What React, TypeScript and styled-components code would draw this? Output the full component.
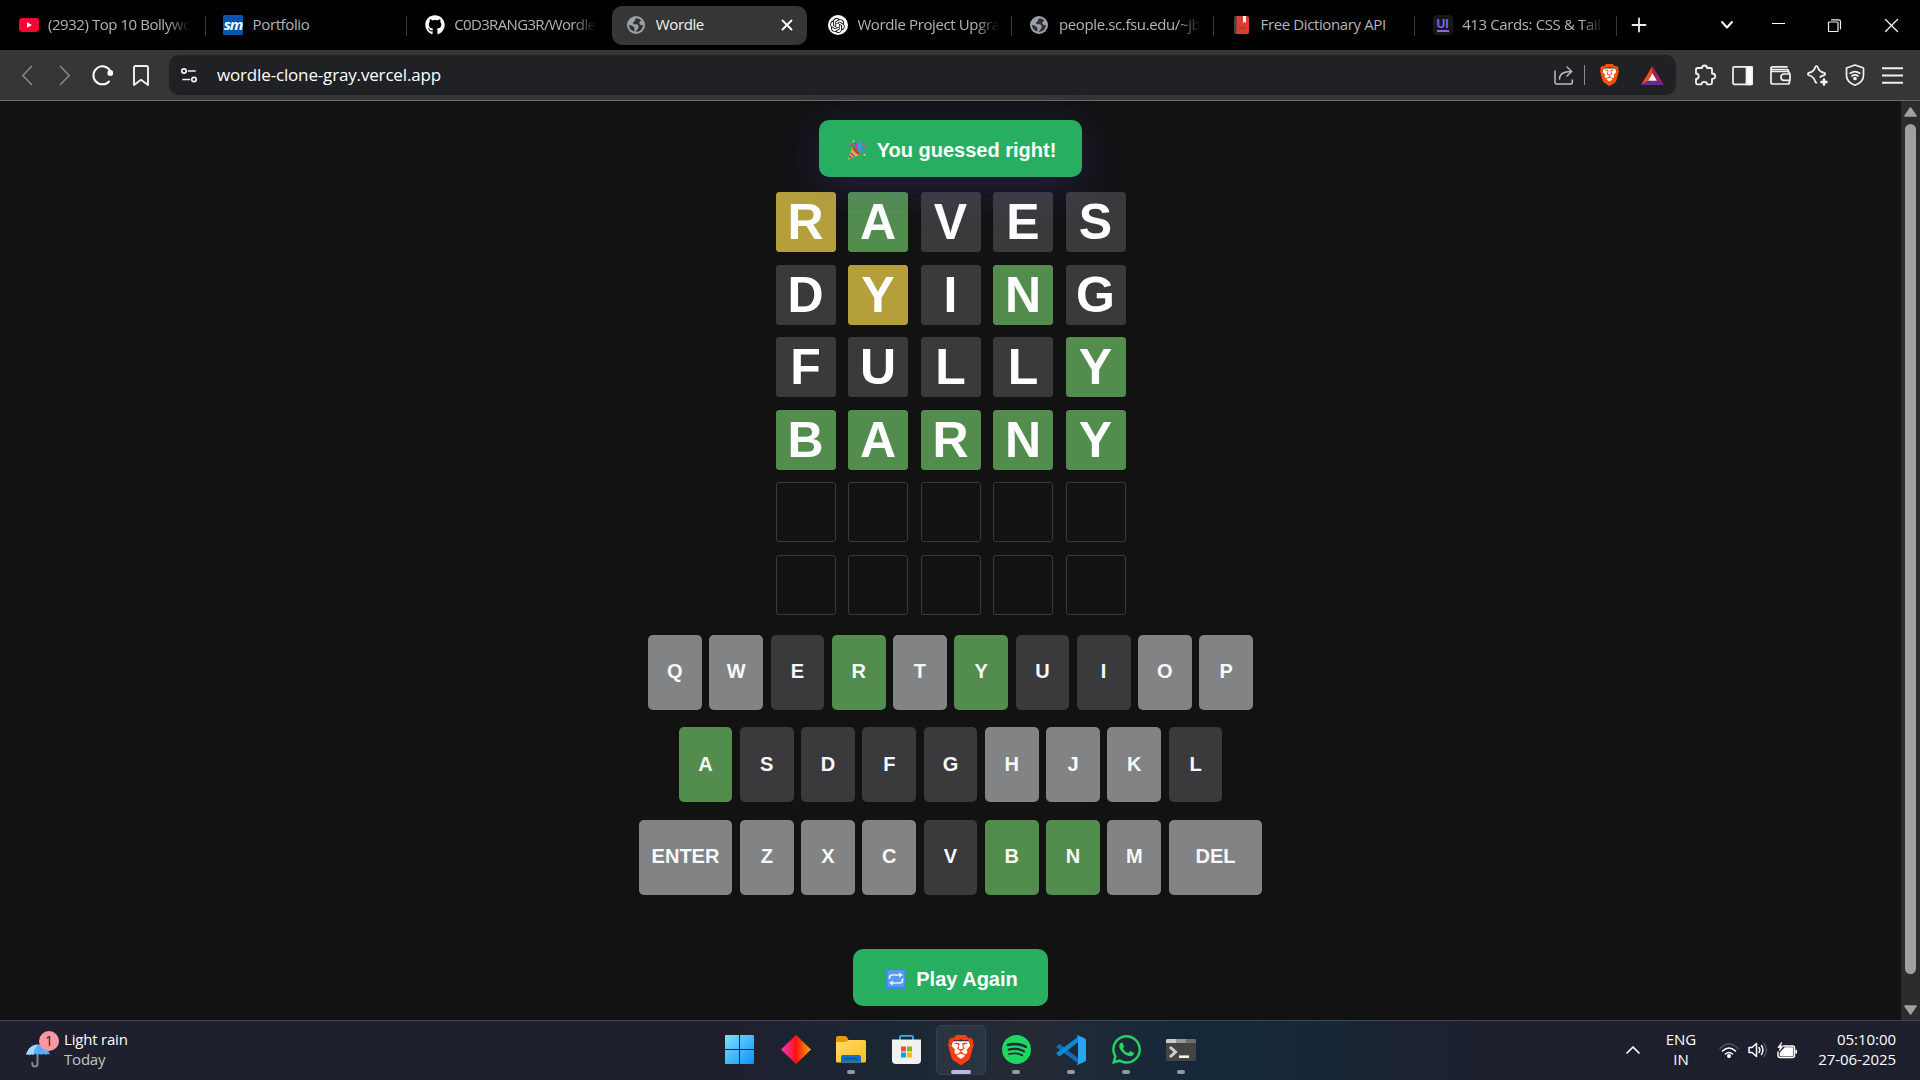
import React from "react";
import styled, { createGlobalStyle } from "styled-components";
import { SiBrave, SiOpenai, SiSpotify } from "react-icons/si";
import { FaGithub, FaWhatsapp } from "react-icons/fa";

const Global = createGlobalStyle`
  * { box-sizing: border-box; }
  body { margin: 0; background: #121213; overflow: hidden; }
  svg { display: block; flex: none; overflow: visible; }
`;

const ui = `"Open Sans", "Noto Sans", sans-serif`;

const Screen = styled.div`
  width: 1920px;
  height: 1080px;
  display: flex;
  flex-direction: column;
  background: #121213;
  font-family: ${ui};
`;

/* ---------- tab strip ---------- */
const TabStrip = styled.div`
  height: 50px;
  display: flex;
  align-items: center;
  background: #000;
  padding-left: 4px;
`;
const TabCell = styled.div<{ $divider?: boolean }>`
  position: relative;
  width: 201.6px;
  height: 39px;
  display: flex;
  align-items: center;
  padding-left: 3.500px;
  &:first-child { padding-left: 0.500px; }
  &::after {
    content: "";
    position: absolute;
    right: 0;
    top: 10px;
    width: 1px;
    height: 20px;
    background: ${(p) => (p.$divider ? "#3a3a3a" : "transparent")};
  }
`;
const TabFace = styled.div<{ $active?: boolean }>`
  width: 195px;
  height: 39px;
  border-radius: 10px;
  background: ${(p) => (p.$active ? "#363636" : "transparent")};
  display: flex;
  align-items: center;
  padding: 0 14px 0 13.500px;
  gap: 9px;
`;
const Favicon = styled.span`
  width: 21px;
  display: flex;
  justify-content: center;
  flex: none;
`;
const TabTitle = styled.span<{ $active?: boolean; $fade?: boolean; $track?: number }>`
  flex: 1;
  min-width: 0;
  max-width: 145px;
  margin-right: -8px;
  padding-bottom: 2px;
  overflow: hidden;
  white-space: nowrap;
  font-size: 15px;
  line-height: 22px;
  letter-spacing: ${(p) => p.$track ?? -0.38}px;
  color: ${(p) => (p.$active ? "#f1f1f1" : "#b4b4b4")};
  mask-image: ${(p) => (p.$fade ? "linear-gradient(90deg, #000 82%, transparent 98%)" : "none")};
`;
const CloseTab = styled.span`
  display: flex;
  margin-right: 1px;
`;
const NewTab = styled.div`
  width: 44px;
  display: flex;
  justify-content: center;
`;
const WindowControls = styled.div`
  margin-left: auto;
  display: flex;
  align-items: center;
`;
const Control = styled.div<{ $w: number }>`
  width: ${(p) => p.$w}px;
  display: flex;
  justify-content: center;
`;

/* ---------- toolbar ---------- */
const Toolbar = styled.div`
  height: 51px;
  display: flex;
  align-items: center;
  background: #363636;
  border-bottom: 1px solid #6a6a6a;
  padding: 0 8.5px 0 8px;
`;
const ToolSlot = styled.div<{ $w?: number }>`
  width: ${(p) => p.$w ?? 37.5}px;
  height: 40px;
  display: flex;
  align-items: center;
  justify-content: center;
`;
const AddressBar = styled.div`
  flex: 1;
  height: 40px;
  margin: 0 10.5px 0 9px;
  border-radius: 10px;
  background: #202124;
  display: flex;
  align-items: center;
  padding-left: 12px;
  padding-right: 12px;
`;
const Url = styled.span`
  margin-left: 20px;
  font-size: 17px;
  line-height: 24px;
  letter-spacing: -0.16px;
  color: #fff;
  flex: 1;
`;
const BarDivider = styled.span`
  width: 1px;
  height: 20px;
  margin: 0 15px 0 10px;
  background: #8b8c8e;
`;
const BarIcon = styled.span<{ $gap?: number }>`
  display: flex;
  margin-left: ${(p) => p.$gap ?? 0}px;
`;

/* ---------- page ---------- */
const Viewport = styled.div`
  height: 919px;
  display: flex;
`;
const Page = styled.main`
  width: 1901px;
  display: flex;
  flex-direction: column;
  align-items: center;
  padding-top: 19px;
  font-family: "Liberation Sans", Arial, sans-serif;
`;
const Pill = styled.div<{ $w: number; $glow?: boolean }>`
  position: relative;
  z-index: 1;
  width: ${(p) => p.$w}px;
  height: 57px;
  flex: none;
  border-radius: 10px;
  background: #27ae60;
  color: #fff;
  font-size: 20px;
  font-weight: 700;
  display: flex;
  align-items: center;
  justify-content: center;
  gap: 10px;
  padding: ${(p) => (p.$glow ? 3 : 4)}px 0 0 3px;
  white-space: nowrap;
  box-shadow: ${(p) => (p.$glow ? "0 10px 44px rgba(92, 96, 255, 0.2)" : "none")};
`;
const Board = styled.div`
  margin-top: 15px;
  display: grid;
  grid-template-columns: repeat(5, 60px);
  grid-auto-rows: 60px;
  gap: 12.5px;
`;
type State = "hit" | "near" | "miss" | "idle";
const fill: Record<State, string> = {
  hit: "#538d4e",
  near: "#b59f3b",
  miss: "#3a3a3c",
  idle: "#818384",
};
const Tile = styled.div<{ $state?: State }>`
  border-radius: 3px;
  border: 1px solid ${(p) => (p.$state ? fill[p.$state] : "#3a3a3c")};
  background: ${(p) => (p.$state ? fill[p.$state] : "transparent")};
  color: #fff;
  font-size: 50px;
  font-weight: 700;
  line-height: 58px;
  text-align: center;
`;
const Keyboard = styled.div`
  margin-top: 20px;
  display: flex;
  flex-direction: column;
  align-items: center;
  gap: 17.5px;
`;
const KeyRow = styled.div`
  display: flex;
  gap: 7.5px;
`;
const Key = styled.div<{ $state: State; $wide?: boolean }>`
  width: ${(p) => (p.$wide ? 93.75 : 53.75)}px;
  height: 75px;
  border-radius: 5px;
  background: ${(p) => fill[p.$state]};
  color: #f8f8f8;
  font-size: 20px;
  font-weight: 700;
  display: flex;
  align-items: center;
  justify-content: center;
  padding-bottom: 1px;
`;
const Again = styled.div`
  margin-top: 54px;
`;
const ScrollTrack = styled.div`
  width: 19px;
  background: #2c2c2c;
  display: flex;
  flex-direction: column;
  align-items: center;
  padding: 6px 0 5px;
`;
const ScrollThumb = styled.div`
  width: 11px;
  height: 850px;
  margin: 7px 0 auto;
  border-radius: 6px;
  background: #9f9f9f;
`;

/* ---------- taskbar ---------- */
const Taskbar = styled.footer`
  height: 60px;
  border-top: 1px solid #45474d;
  background: linear-gradient(90deg, #1e202e 0, #1e202e 740px, #1b2734 900px, #242a34 1030px, #14283a 1190px, #14283a 1250px, #1d202d 1480px, #1d1f2c 100%);
  display: flex;
  color: #fff;
  font-size: 15px;
  line-height: 20px;
`;
const Weather = styled.div`
  width: 716px;
  padding-left: 25px;
  padding-bottom: 2px;
  display: flex;
  align-items: center;
`;
const WeatherText = styled.div`
  margin-left: 5px;
  display: flex;
  flex-direction: column;
  padding-bottom: 2px;
`;
const Line = styled.span<{ $dim?: boolean; $track?: number }>`
  color: ${(p) => (p.$dim ? "#c2c3c8" : "#fff")};
  letter-spacing: ${(p) => p.$track ?? -0.2}px;
`;
const Apps = styled.div`
  display: flex;
  gap: 5px;
  padding-top: 4px;
`;
const AppSlot = styled.div<{ $active?: boolean }>`
  width: 50px;
  height: 50px;
  border-radius: 5px;
  border: 1px solid ${(p) => (p.$active ? "#35424f" : "transparent")};
  background: ${(p) => (p.$active ? "#2a3541" : "transparent")};
  display: flex;
  flex-direction: column;
  align-items: center;
  justify-content: space-between;
  padding-top: 8px;
  &:first-child { padding-right: 3px; }
`;
const Running = styled.span<{ $active?: boolean; $on?: boolean }>`
  width: ${(p) => (p.$active ? 20 : 8)}px;
  height: 4px;
  border-radius: 2px;
  background: ${(p) => (p.$active ? "#beb8e6" : p.$on ? "#9698a0" : "transparent")};
`;
const Tray = styled.div`
  flex: 1;
  display: flex;
  align-items: center;
  justify-content: flex-end;
  padding: 0 24px 1px 0;
`;
const TwoLine = styled.div<{ $w: number; $align: string }>`
  width: ${(p) => p.$w}px;
  display: flex;
  flex-direction: column;
  align-items: ${(p) => p.$align};
  white-space: nowrap;
  padding-bottom: 2px;
`;
const TrayIcons = styled.div`
  display: flex;
  align-items: center;
  gap: 9px;
  margin: 0 20px 0 7px;
`;

/* ---------- icons ---------- */
const Stroke = ({ w, h, d, c = "#f2f2f2", s = 1.6, children }: { w: number; h: number; d?: string; c?: string; s?: number; children?: React.ReactNode }) => (
  <svg width={w} height={h} viewBox={`0 0 ${w} ${h}`} fill="none" stroke={c} strokeWidth={s} strokeLinecap="round" strokeLinejoin="round">
    {d && <path d={d} />}
    {children}
  </svg>
);

const Globe = () => (
  <svg width="18" height="18" viewBox="0 0 18 18">
    <circle cx="9" cy="9" r="9" fill="#9aa0a6" />
    <path d="M9.8 2.2 8 3.3v1.8L5.8 6.6 6.7 8.3h3.5l1.6 1.9-.7 2.2-2.6 3.4A7 7 0 0 0 15.6 11l.3-2.2-2 .4-1.6-1.5.4-2 1.6-1.1A7 7 0 0 0 9.8 2.2ZM2 8.8 5.5 10l1.9 1.8v3.7A7 7 0 0 1 2 8.8Z" fill="#2f3133" />
  </svg>
);
const Youtube = () => (
  <svg width="20" height="14" viewBox="0 0 20 14">
    <rect width="20" height="14" rx="3.4" fill="#ff0033" />
    <path d="m8 4.2 5 2.8-5 2.8Z" fill="#fff" />
  </svg>
);
const SmBadge = styled.span`
  width: 20px;
  height: 20px;
  border-radius: 1.5px;
  background: #0254ac;
  color: #fff;
  font: italic 700 15px/18px "Open Sans", sans-serif;
  letter-spacing: -1.1px;
  text-align: center;
`;
const ChatBadge = styled.span`
  width: 20px;
  height: 20px;
  border-radius: 50%;
  background: #fff;
  color: #111;
  display: flex;
  align-items: center;
  justify-content: center;
`;
const Book = () => (
  <svg width="15" height="18" viewBox="0 0 15 18">
    <path d="M0 1.5Q0 0 1.5 0H3v18H1.5Q0 18 0 16.5Z" fill="#444" />
    <path d="M2.5 0H13q2 0 2 2v14q0 2-2 2H2.5Z" fill="#dc3c34" />
    <path d="M9 0h3v7l-1.5-1.2L9 7Z" fill="#fff" />
    <path d="M5 12h7" stroke="#a92a26" strokeWidth="1" />
  </svg>
);
const UiBadge = styled.span`
  width: 20px;
  height: 20px;
  border-radius: 4px;
  background: #171719;
  display: flex;
  flex-direction: column;
  align-items: center;
  padding-top: 3px;
  color: #7a63f0;
  font: 700 12px/11px "Inter", sans-serif;
  &::after {
    content: "";
    width: 12px;
    height: 2px;
    margin-top: 1px;
    background: #9161e8;
  }
`;

const BraveLion = ({ size, color }: { size: number; color: string }) => (
  <svg width={size * 0.86} height={size} viewBox="0 0 20.6 24">
    <path d="M4 5h12.6l1.6 4-3.4 9-4.5 3.3L5.800 18 2.400 9Z" fill="#fff" />
    <g transform="translate(-1.700 0)" color={color}>
      <SiBrave size={24} />
    </g>
  </svg>
);
const Bat = () => (
  <svg width="23" height="19" viewBox="0 0 23 19">
    <path d="M11.500 0 0 19l7.500-4.300 4-7.200Z" fill="#ff4724" />
    <path d="M11.500 0 23 19l-7.500-4.300-4-7.200Z" fill="#9e1f63" />
    <path d="M0 19h23l-7.500-4.300h-8Z" fill="#662d91" />
    <path d="m11.500 7.300 4.300 7.500H7.200Z" fill="#fff" />
  </svg>
);
const Popper = () => (
  <svg width="19" height="20" viewBox="0 0 19 20">
    <path d="M4.500 7 12 15 .8 19.600q-.8.200-.6-.6Z" fill="#f5a33a" />
    <path d="m2.800 13 4 4M1.400 16l2.400 2.400" stroke="#4a5ae0" strokeWidth="1.400" />
    <ellipse cx="8.300" cy="11" rx="1.700" ry="4.800" transform="rotate(-43 8.300 11)" fill="#a8502c" />
    <path d="M7.500 9C9.500 7 9 4.500 6.500 3M3 5.500q2-1 3.300.8" stroke="#e32a86" strokeWidth="1.700" fill="none" />
    <path d="M9.500 10.500c3.500-.5 1.500-4.500 4.500-6M9 8q3-2.500 2-7.500" stroke="#2f9df0" strokeWidth="2" fill="none" />
    <path d="M11 12.500c2-2.500 5-2 7-.2" stroke="#3894ee" strokeWidth="1.800" fill="none" />
    <path d="m13.500 8 5-1.800M14.500 4.200l2-1.400" stroke="#e83d99" strokeWidth="1.700" />
    <circle cx="5.500" cy="1.200" r="1" fill="#f2cb44" />
    <circle cx="16.500" cy="14.800" r="1.100" fill="#f2cb44" />
    <circle cx="1.800" cy="4.500" r="1" fill="#e4428d" />
  </svg>
);
const Repeat = () => (
  <svg width="20" height="20" viewBox="0 0 20 20">
    <rect width="20" height="20" rx="2" fill="#3f86e8" />
    <rect x="1.500" y="1.200" width="17" height="16.800" rx="1.500" fill="#579cf4" />
    <path d="M3.500 10V8.700Q3.500 6 6.200 6H14M16.500 9.500v1.800q0 2.700-2.700 2.700H6" stroke="#e9effe" strokeWidth="1.700" fill="none" />
    <path d="m13 3.500 4 2.500-4 2.500ZM7 11.500 3 14l4 2.500Z" fill="#e9effe" />
  </svg>
);
const Umbrella = () => (
  <svg width="34" height="37" viewBox="0 0 34 37">
    <path d="M12.500 22v10.500q0 3-2.600 3t-2.600-3V31" stroke="#85878c" strokeWidth="2" fill="none" />
    <path d="M1 24C3 17 7.500 13.500 13 13.500S23 17 25 24q-2-2-4 0-2.200-2-4.300 0-2.200-2-4.300 0-2.200-2-4.200 0-1.800-1.500-3.500 0-1.700-1.500-3.700 0Z" fill="#58aef5" />
    <path d="M1 24C3 17 7.500 13.500 13 13.500 10 17 9 20 8.200 24q-1.800-1.500-3.500 0-1.700-1.500-3.700 0Z" fill="#a5d6ff" />
    <circle cx="24" cy="10" r="10" fill="#ff98a4" />
    <text x="24" y="15" textAnchor="middle" fontSize="14" fill="#222" fontFamily="Open Sans, sans-serif">1</text>
  </svg>
);
const Windows = () => (
  <svg width="29" height="29" viewBox="0 0 29 29">
    <defs>
      <linearGradient id="win" x1="0" y1="0" x2="1" y2="1">
        <stop offset="0" stopColor="#7fe0ff" />
        <stop offset="1" stopColor="#0c93fb" />
      </linearGradient>
    </defs>
    <path d="M1 0h13v14H0V1q0-1 1-1ZM15 0h13q1 0 1 1v13H15ZM0 15h14v14H1q-1 0-1-1ZM15 15h14v13q0 1-1 1H15Z" fill="url(#win)" />
  </svg>
);
const Diamond = () => (
  <svg width="30" height="29" viewBox="0 0 30 29">
    <defs>
      <linearGradient id="dia" x1="0" x2="1">
        <stop offset="0" stopColor="#ff35d0" />
        <stop offset=".5" stopColor="#ff1010" />
        <stop offset="1" stopColor="#ffb000" />
      </linearGradient>
    </defs>
    <path d="M15 0 30 14.500 15 29 0 14.500Z" fill="url(#dia)" />
  </svg>
);
const Folder = () => (
  <svg width="30" height="27" viewBox="0 0 30 27">
    <defs>
      <linearGradient id="fol" x1="0" y1="0" x2="1" y2="1">
        <stop offset="0" stopColor="#ffdc70" />
        <stop offset="1" stopColor="#ffbd18" />
      </linearGradient>
    </defs>
    <path d="M0 2q0-2 2-2h7q1.500 0 2.300 1.500L12.500 4H28v6H0Z" fill="#e39c05" />
    <path d="M0 6h9.500L13 4h15.500q1.500 0 1.500 1.500V25q0 1.500-1.500 1.500h-27Q0 26.500 0 25Z" fill="url(#fol)" />
    <path d="M5 26.500V21q0-2 2-2h16q2 0 2 2v5.500Z" fill="#0b72c9" />
    <path d="M8.500 22.700h13" stroke="#084b91" strokeWidth="1.300" />
  </svg>
);
const Store = () => (
  <svg width="29" height="29" viewBox="0 0 29 29">
    <path d="M8 6V2q0-1.200 1.200-1.200h10.600Q21 .8 21 2v4" stroke="#24b8f1" strokeWidth="1.800" fill="none" />
    <path d="M0 4.500h29V25q0 4-4 4H4q-4 0-4-4Z" fill="#f1f1f1" />
    <path d="M9 11.500h5v5H9Z" fill="#f25022" />
    <path d="M15 11.500h5v5h-5Z" fill="#7fba00" />
    <path d="M9 17.500h5v5H9Z" fill="#00a4ef" />
    <path d="M15 17.500h5v5h-5Z" fill="#ffb900" />
  </svg>
);
const Code = () => (
  <svg width="30" height="30" viewBox="0 0 30 30">
    <path d="M.8 11.300 2.500 9.400q.8-.7 1.700 0L23 23.800V29L.8 12.800Q0 12 .8 11.300Z" fill="#0a6fbd" />
    <path d="M.8 19 2.500 21q.8.600 1.700 0L23 6.500V1L.8 17.500Q0 18.200.8 19Z" fill="#1287d4" />
    <path d="M22 .3 29 3.400q1 .5 1 1.600v20q0 1.100-1 1.600L22 29.700q-.9.300-1.500-.4 1.500 0 1.500-1.800v-25Q22 .8 20.500.7 21.100 0 22 .3Z" fill="#29a4f2" />
  </svg>
);
const Terminal = () => (
  <svg width="30" height="22" viewBox="0 0 30 22">
    <rect width="30" height="22" rx="1.500" fill="#444" />
    <path d="M0 4V1.500Q0 0 1.500 0H10v4Z" fill="#ccc" />
    <path d="M10 0h10v4H10Z" fill="#979797" />
    <path d="M20 0h8.500Q30 0 30 1.500V4H20Z" fill="#6d6d6d" />
    <path d="m4 8 5.500 5L4 18" stroke="#d0d0d0" strokeWidth="3" fill="none" />
    <path d="M13 17.700h10" stroke="#f2f2f2" strokeWidth="2.600" />
  </svg>
);
const ArrowUp = () => (
  <svg width="13" height="10" viewBox="0 0 13 10">
    <path d="M6.500 1 12 9H1Z" fill="#a0a0a0" stroke="#a0a0a0" strokeWidth="1.600" strokeLinejoin="round" />
  </svg>
);
const ArrowDown = () => (
  <svg width="13" height="10" viewBox="0 0 13 10">
    <path d="M6.500 9 12 1H1Z" fill="#a0a0a0" stroke="#a0a0a0" strokeWidth="1.600" strokeLinejoin="round" />
  </svg>
);

/* ---------- data ---------- */
const tabs: { title: string; icon: React.ReactNode; active?: boolean; fade?: boolean; divider?: boolean; track?: number }[] = [
  { title: "(2932) Top 10 Bollywo", icon: <Youtube />, fade: true, divider: true, track: -0.45 },
  { title: "Portfolio", icon: <SmBadge>sm</SmBadge>, divider: true },
  { title: "C0D3RANG3R/Wordle", icon: <FaGithub size={20} color="#fff" />, fade: true, track: -0.65 },
  { title: "Wordle", icon: <Globe />, active: true },
  { title: "Wordle Project Upgra", icon: <ChatBadge><SiOpenai size={15} /></ChatBadge>, fade: true, divider: true },
  { title: "people.sc.fsu.edu/~jb", icon: <Globe />, fade: true, divider: true },
  { title: "Free Dictionary API", icon: <Book />, divider: true },
  { title: "413 Cards: CSS & Tail", icon: <UiBadge>UI</UiBadge>, fade: true, divider: true },
];

const codes: Record<string, State> = { h: "hit", n: "near", m: "miss", i: "idle" };
const guesses: [string, string][] = [
  ["RAVES", "nhmmm"],
  ["DYING", "mnmhm"],
  ["FULLY", "mmmmh"],
  ["BARNY", "hhhhh"],
  ["     ", "     "],
  ["     ", "     "],
];
const keys: [string[], string][] = [
  ["QWERTYUIOP".split(""), "iimhihmmii"],
  ["ASDFGHJKL".split(""), "hmmmmiiim"],
  [["ENTER", ..."ZXCVBNM".split(""), "DEL"], "iiiimhhii"],
];
const apps: { icon: React.ReactNode; on?: boolean; active?: boolean }[] = [
  { icon: <Windows /> },
  { icon: <Diamond /> },
  { icon: <Folder />, on: true },
  { icon: <Store /> },
  { icon: <BraveLion size={30} color="#ff3d14" />, active: true },
  { icon: <SiSpotify size={29} color="#1ed760" />, on: true },
  { icon: <Code />, on: true },
  { icon: <FaWhatsapp size={33} color="#25d366" />, on: true },
  { icon: <Terminal />, on: true },
];
const IconBox = styled.span`
  height: 31px;
  display: flex;
  align-items: center;
`;

export default function App() {
  return (
    <Screen>
      <Global />
      <TabStrip>
        {tabs.map((t) => (
          <TabCell key={t.title} $divider={t.divider}>
            <TabFace $active={t.active}>
              <Favicon>{t.icon}</Favicon>
              <TabTitle $active={t.active} $fade={t.fade} $track={t.track}>{t.title}</TabTitle>
              {t.active && (
                <CloseTab><Stroke w={10} h={10} d="M.5.500 9.500 9.500M9.500.500.500 9.500" s={1.9} c="#fff" /></CloseTab>
              )}
            </TabFace>
          </TabCell>
        ))}
        <NewTab><Stroke w={14} h={14} d="M7 .5v13M.5 7h13" s={1.800} c="#eee" /></NewTab>
        <WindowControls>
          <Control $w={46}><Stroke w={12} h={8} d="m1 1 5 5.500L11 1" s={2} c="#fff" /></Control>
          <Control $w={56}>
            <svg width="13" height="13" viewBox="0 0 13 13"><path d="M0 4.500h13" stroke="#fff" strokeWidth="1" /></svg>
          </Control>
          <Control $w={56}><Stroke w={13} h={13} s={1.200} d="M1.200 3h8q.8 0 .8.800v8q0 .7-.8.700h-8q-.7 0-.7-.7v-8Q.5 3 1.200 3ZM3.500.800h7.200q1.800 0 1.800 1.800v7.200" /></Control>
          <Control $w={58}><Stroke w={13} h={13} d="M.5.500 12.500 12.500M12.500.500.500 12.500" s={1.200} c="#fff" /></Control>
        </WindowControls>
      </TabStrip>

      <Toolbar>
        <ToolSlot $w={38}><Stroke w={10} h={19} d="M9.500.500.800 9.500l8.700 9" c="#858585" s={1.700} /></ToolSlot>
        <ToolSlot $w={38}><Stroke w={10} h={19} d="m.5.500 8.700 9-8.700 9" c="#858585" s={1.700} /></ToolSlot>
        <ToolSlot $w={37}>
          <Stroke w={21} h={20} d="M17 16.500A9 9 0 1 1 18.300 6" s={2} c="#fff">
            <circle cx="18.300" cy="8" r="1.900" fill="#fff" />
          </Stroke>
        </ToolSlot>
        <ToolSlot $w={39}><Stroke w={16} h={21} d="M1 2.500Q1 1 2.500 1h11Q15 1 15 2.500V20l-7-5.200L1 20Z" s={1.900} /></ToolSlot>
        <AddressBar>
          <Stroke w={16} h={15} s={1.700}>
            <circle cx="3" cy="3" r="2.200" />
            <circle cx="13" cy="11.500" r="2.200" />
            <path d="M7.500 3H14M2 11.500h6.500" />
          </Stroke>
          <Url>wordle-clone-gray.vercel.app</Url>
          <Stroke w={20} h={19} c="#b9babc" s={1.500} d="M1 5v11.500Q1 18 2.500 18h14q1.800 0 1.800-1.800V14M5.500 13C5.500 8 9 5.500 17 5.500M13 1l4.700 4.500L13 10" />
          <BarDivider />
          <BarIcon><BraveLion size={22} color="#ff5000" /></BarIcon>
          <BarIcon $gap={22}><Bat /></BarIcon>
        </AddressBar>
        <ToolSlot>
          <Stroke w={21} h={20} s={1.800} d="M1 4.500Q1 3 2.500 3H7Q7 .500 9.500.500T12 3h3.500Q17 3 17 4.500V8.500q3.300 0 3.300 2.700T17 13.800v4q0 1.500-1.500 1.500H12q0-2.500-2.700-2.500T6.500 19.300h-4Q1 19.300 1 17.800V14q2.700 0 2.700-2.700T1 8.500Z" />
        </ToolSlot>
        <ToolSlot>
          <Stroke w={21} h={19} s={1.700}>
            <rect x="1" y=".8" width="19" height="17.500" rx="1.200" />
            <path d="M14.500.800H20v17.500h-5.500Z" fill="#fff" />
          </Stroke>
        </ToolSlot>
        <ToolSlot>
          <Stroke w={21} h={19} s={1.700} d="M18.500 6V5q0-1.500-1.500-1.500H2.500Q1 3.500 1 2.200T2.500.900h14.500M1 2.500V16q0 2 2 2h14.500q2 0 2-2v-1.500M1 5.500h16.500q2 0 2 2V8M20 8h-6q-3 0-3 3.200t3 3.200h6Z" />
        </ToolSlot>
        <ToolSlot>
          <Stroke w={21} h={21} s={1.700} d="M9.500 1q1 0 1.300 1.200 1.200 4.500 6.500 5.700.9.400.9 1.200t-.9 1.100q-2.500.6-4 1.800M9.500 1q-1 0-1.300 1.200Q7 6.700 1.800 7.900q-.9.400-.9 1.200t.9 1.100q5.200 1.500 6.400 6.300.3 1.200 1.300 1.200">
            <path d="M17 14.500v5M14.500 17h5" strokeWidth="2.600" />
          </Stroke>
        </ToolSlot>
        <ToolSlot>
          <Stroke w={20} h={22} s={1.700} d="M10 1 18.500 4v7.500q0 6.500-8.500 9.700Q1.500 18 1.500 11.500V4Z">
            <path d="M5.300 9.300q4.700-3.500 9.400 0M7 12q3-2.200 6 0" />
            <circle cx="10" cy="14.500" r="1" fill="#fff" />
          </Stroke>
        </ToolSlot>
        <ToolSlot>
          <svg width="21" height="17" viewBox="0 0 21 17"><path d="M0 1.200h21M0 8.500h21M0 15.800h21" stroke="#f0f0f0" strokeWidth="2" /></svg>
        </ToolSlot>
      </Toolbar>

      <Viewport>
        <Page>
          <Pill $w={263} $glow><Popper />You guessed right!</Pill>
          <Board>
            {guesses.map(([word, marks], r) =>
              word.split("").map((ch, i) => (
                <Tile key={`${r}-${i}`} $state={codes[marks[i]]}>{ch.trim()}</Tile>
              ))
            )}
          </Board>
          <Keyboard>
            {keys.map(([row, marks], r) => (
              <KeyRow key={r}>
                {row.map((k, i) => (
                  <Key key={k} $state={codes[marks[i]]} $wide={k.length > 1}>{k}</Key>
                ))}
              </KeyRow>
            ))}
          </Keyboard>
          <Again><Pill $w={195}><Repeat />Play Again</Pill></Again>
        </Page>
        <ScrollTrack>
          <ArrowUp />
          <ScrollThumb />
          <ArrowDown />
        </ScrollTrack>
      </Viewport>

      <Taskbar>
        <Weather>
          <Umbrella />
          <WeatherText>
            <Line>Light rain</Line>
            <Line $dim>Today</Line>
          </WeatherText>
        </Weather>
        <Apps>
          {apps.map((a, i) => (
            <AppSlot key={i} $active={a.active}>
              <IconBox>{a.icon}</IconBox>
              <Running $active={a.active} $on={a.on} />
            </AppSlot>
          ))}
        </Apps>
        <Tray>
          <Control $w={34}><Stroke w={14} h={8} d="m1 7 6-6 6 6" s={1.700} c="#fff" /></Control>
          <TwoLine $w={62} $align="center">
            <Line $track={0}>ENG</Line>
            <Line $track={0}>IN</Line>
          </TwoLine>
          <TrayIcons>
            <Stroke w={20} h={15} s={1.600} c="#fff">
              <path d="M1 5.500Q10-3.500 19 5.500" stroke="#53555f" />
              <path d="M3.500 8q6.500-6 13 0M6.500 11q3.500-3 7 0" />
              <circle cx="10" cy="13" r="1.200" fill="#fff" />
            </Stroke>
            <Stroke w={20} h={16} s={1.500} c="#fff">
              <path d="M1 5.500h3L8.500 1.500v13L4 10.500H1ZM11 5.500q1.800 2.500 0 5M13.500 3.500q3 4.500 0 9" />
              <path d="M16 1.500q5 6.500 0 13" stroke="#53555f" />
            </Stroke>
            <Stroke w={20} h={17} s={1.500} c="#fff">
              <path d="M6.500 4h9q2 0 2 2v7.500q0 2-2 2H3q-2 0-2-2V10M19.300 8.500v2.500" />
              <path d="M8 6h7.500v7.500H3.500V11Z" fill="#fff" />
              <path d="M4.500.500.800 5.500H3L2.500 9 6 4.200H4Z" fill="#fff" strokeWidth=".6" />
            </Stroke>
          </TrayIcons>
          <TwoLine $w={79} $align="flex-end">
            <Line $track={-0.05}>05:10:00</Line>
            <Line $track={-0.05}>27-06-2025</Line>
          </TwoLine>
        </Tray>
      </Taskbar>
    </Screen>
  );
}
